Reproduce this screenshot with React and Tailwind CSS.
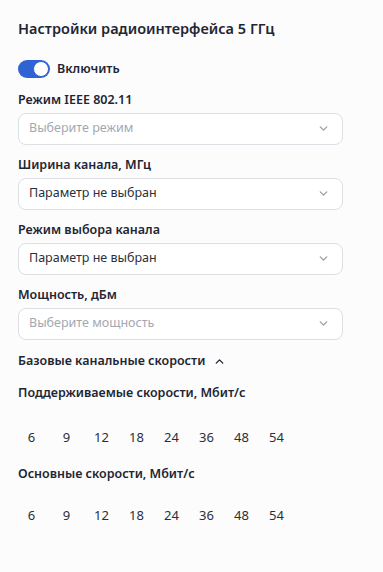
import { ChevronDown, ChevronUp } from "lucide-react";

const rates = ["6", "9", "12", "18", "24", "36", "48", "54"];

function Field({ label, value, placeholder }) {
  return (
    <div className="flex flex-col">
      <div className="text-[12.5px] font-semibold leading-[18px] text-[#1f2633]">{label}</div>
      <div className="mt-[4px] flex h-[32px] w-[325px] items-center justify-between rounded-[8px] border border-[#dcdfe4] bg-white pl-[10px] pr-[12px]">
        <span className={placeholder ? "text-[12.5px] text-[#a3a8b0]" : "text-[12.5px] text-[#2a303b]"}>{value}</span>
        <ChevronDown size={13} strokeWidth={2.5} className="text-[#9aa0a8]" />
      </div>
    </div>
  );
}

function Rates() {
  return (
    <div className="-ml-[4px] flex">
      {rates.map((r) => (
        <div key={r} className="w-[35px] text-center text-[13px] text-[#2a303b]">
          {r}
        </div>
      ))}
    </div>
  );
}

export default function App() {
  return (
    <div className="min-h-[572px] bg-[#fcfcfd] px-[18px] pt-[18px] font-['Noto_Sans',sans-serif]">
      <h1 className="text-[14.5px] font-semibold leading-[20px] text-[#1f2633]">
        Настройки радиоинтерфейса 5 ГГц
      </h1>

      <div className="mt-[22px] flex items-center gap-[7px]">
        <div className="relative h-[18px] w-[32px] rounded-full bg-[#2f62d2]">
          <div className="absolute right-[1px] top-[1px] h-[16px] w-[16px] rounded-full border border-[#2f62d2] bg-white" />
        </div>
        <span className="text-[12.5px] font-semibold text-[#1f2633]">Включить</span>
      </div>

      <div className="mt-[12px] flex flex-col gap-[11px]">
        <Field label="Режим IEEE 802.11" value="Выберите режим" placeholder />
        <Field label="Ширина канала, МГц" value="Параметр не выбран" />
        <Field label="Режим выбора канала" value="Параметр не выбран" />
        <Field label="Мощность, дБм" value="Выберите мощность" placeholder />
      </div>

      <div className="mt-[12px] flex items-center gap-[8px]">
        <span className="text-[12.5px] font-semibold text-[#1f2633]">Базовые канальные скорости</span>
        <ChevronUp size={13} strokeWidth={2.5} className="text-[#1f2633]" />
      </div>

      <div className="mt-[13px] text-[12.5px] font-semibold text-[#1f2633]">
        Поддерживаемые скорости, Мбит/с
      </div>
      <div className="mt-[26px]">
        <Rates />
      </div>

      <div className="mt-[17px] text-[12.5px] font-semibold text-[#1f2633]">
        Основные скорости, Мбит/с
      </div>
      <div className="mt-[22px]">
        <Rates />
      </div>
    </div>
  );
}
